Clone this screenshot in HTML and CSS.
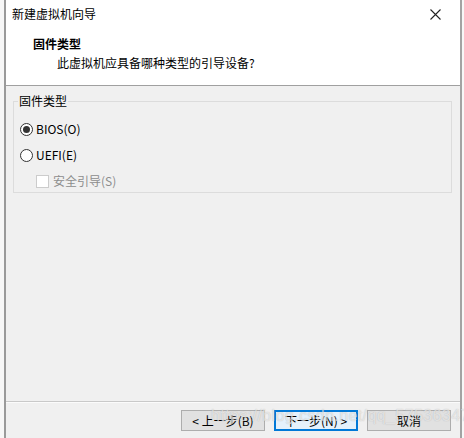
FILE: index.html
```html
<!DOCTYPE html>
<html lang="zh-CN">
<head>
    <meta charset="UTF-8">
    <meta name="viewport" content="width=device-width, initial-scale=1.0">
    <title>新建虚拟机向导</title>
    <link rel="stylesheet" href="styles.css">
</head>
<body>
    <div class="window">
        <div class="header">
            <div class="titlebar">
                <span class="title">新建虚拟机向导</span>
                <svg class="close" width="11" height="11" viewBox="0 0 11 11">
                    <path d="M0.5 0.5 L10.5 10.5 M10.5 0.5 L0.5 10.5" stroke="#222" stroke-width="1.1" fill="none"/>
                </svg>
            </div>
            <div class="heading">固件类型</div>
            <div class="subtitle">此虚拟机应具备哪种类型的引导设备?</div>
        </div>

        <div class="content">
            <fieldset class="group">
                <legend>固件类型</legend>
                <div class="option">
                    <span class="radio checked"></span>
                    <span class="label">BIOS(O)</span>
                </div>
                <div class="option">
                    <span class="radio"></span>
                    <span class="label">UEFI(E)</span>
                </div>
                <div class="option sub disabled">
                    <span class="checkbox"></span>
                    <span class="label">安全引导(S)</span>
                </div>
            </fieldset>
        </div>

        <div class="footer">
            <button class="btn">&lt; 上一步(B)</button>
            <button class="btn primary">下一步(N) &gt;</button>
            <button class="btn">取消</button>
        </div>
        <div class="watermark">https://blog.csdn.net/qq_57536347</div>
    </div>
</body>
</html>
```

FILE: styles.css
```css
body {
    margin: 0;
    background-color: #f7f7f7;
    font-family: "Noto Sans CJK SC", "Noto Sans", sans-serif;
    font-size: 12px;
    color: #000;
}
.window {
    position: relative;
    margin-left: 4px;
    width: 454px;
    height: 438px;
    border-left: 2px solid #9a9a9a;
    border-right: 2px solid #a3a3a3;
    display: flex;
    flex-direction: column;
    background-color: #f0f0f0;
}
.header {
    background-color: #fff;
    height: 86px;
    border-bottom: 1px solid #a0a0a0;
    box-sizing: border-box;
}
.titlebar {
    height: 28px;
    display: flex;
    align-items: center;
    justify-content: space-between;
    padding-left: 6px;
    padding-right: 19px;
}
.title {
    line-height: 28px;
}
.heading {
    font-weight: bold;
    padding-left: 27px;
    margin-top: 7px;
    line-height: 18px;
}
.subtitle {
    padding-left: 51px;
    margin-top: 1px;
    line-height: 18px;
}
.content {
    flex: 1;
    padding: 7px 8px 0 7px;
}
.group {
    margin: 0;
    padding: 7px 6px 0 6px;
    height: 100px;
    box-sizing: border-box;
    border: 1px solid #dcdcdc;
}
.group legend {
    padding: 0 1px;
    margin-left: -2px;
    line-height: 16px;
}
.option {
    display: flex;
    align-items: center;
    height: 26px;
    gap: 3px;
}
.option.sub {
    padding-left: 16px;
    gap: 4px;
}
.option.disabled {
    color: #8d8d8d;
}
.radio {
    width: 11px;
    height: 11px;
    border: 1px solid #333;
    border-radius: 50%;
    background-color: #fff;
    position: relative;
}
.radio.checked::after {
    content: "";
    position: absolute;
    left: 2px;
    top: 2px;
    width: 7px;
    height: 7px;
    border-radius: 50%;
    background-color: #333;
}
.checkbox {
    width: 11px;
    height: 11px;
    border: 1px solid #cccccc;
    background-color: #fff;
}
.label {
    line-height: 16px;
}
.footer {
    height: 37px;
    border-top: 1px solid #c9c9c9;
    box-shadow: inset 0 1px 0 #fbfbfb;
    display: flex;
    justify-content: flex-end;
    align-items: flex-start;
    gap: 9px;
    padding: 8px 9px 0 0;
    box-sizing: border-box;
}
.btn {
    width: 84px;
    height: 21px;
    padding: 0;
    border: 1px solid #adadad;
    background-color: #e1e1e1;
    font-family: "Noto Sans CJK SC", "Noto Sans", sans-serif;
    font-size: 12px;
    color: #000;
    line-height: 18px;
    white-space: nowrap;
}
.btn.primary {
    border: 2px solid #0078d7;
    background-color: #e5f1fb;
}
.watermark {
    position: absolute;
    left: 205px;
    top: 407px;
    font-family: "Liberation Sans", sans-serif;
    font-size: 16px;
    letter-spacing: 0.4px;
    color: rgba(255, 255, 255, 0.6);
    text-shadow: 0 0 1px rgba(110, 110, 110, 0.45);
    pointer-events: none;
}
```
